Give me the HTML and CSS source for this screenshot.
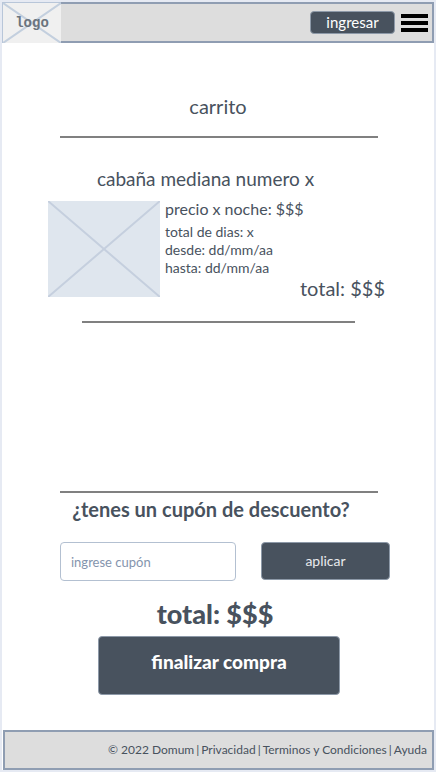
FILE: index.html
```html
<!DOCTYPE html>
<html lang="es">
<head>
<meta charset="utf-8">
<meta name="viewport" content="width=device-width, initial-scale=1">
<title>Carrito</title>
<link rel="stylesheet" href="styles.css">
</head>
<body>
<header class="topbar">
  <a class="logo" href="#" aria-label="logo">
    <svg class="cross" viewBox="0 0 58 40" preserveAspectRatio="none" aria-hidden="true"><path d="M0 0L58 40M58 0L0 40"/></svg>
    <span class="logo-text">logo</span>
  </a>
  <button class="login" type="button">ingresar</button>
  <button class="menu" type="button" aria-label="menú">
    <svg viewBox="0 0 27 18" aria-hidden="true"><path d="M0 2H27M0 9H27M0 16H27"/></svg>
  </button>
</header>
<main class="cart">
  <h1 class="title">carrito</h1>
  <hr class="rule">
  <section class="item">
    <h2 class="item-name">cabaña mediana numero x</h2>
    <div class="item-row">
      <svg class="photo" viewBox="0 0 112 96" preserveAspectRatio="none" aria-hidden="true"><path d="M0 0L112 96M112 0L0 96"/></svg>
      <div class="details">
        <p class="price">precio x noche: $$$</p>
        <p class="line">total de dias: x</p>
        <p class="line">desde: dd/mm/aa</p>
        <p class="line">hasta: dd/mm/aa</p>
        <p class="item-total">total: $$$</p>
      </div>
    </div>
    <hr class="rule item-rule">
  </section>
  <section class="checkout">
    <hr class="rule">
    <h2 class="question"><label for="coupon">¿tenes un cupón de descuento?</label></h2>
    <form class="coupon">
      <input class="coupon-input" id="coupon" type="text" placeholder="ingrese cupón">
      <button class="apply" type="button">aplicar</button>
    </form>
    <p class="total">total: $$$</p>
    <button class="finish" type="button">finalizar compra</button>
  </section>
</main>
<footer class="footer">
  <span>© 2022 Domum</span> | <a href="#">Privacidad</a> | <a href="#">Terminos y Condiciones</a> | <a href="#">Ayuda</a>
</footer>
</body>
</html>
```
FILE: styles.css
```css
* {
  box-sizing: border-box;
  margin: 0;
}

body {
  display: flex;
  flex-direction: column;
  min-height: 100vh;
  border: 2px solid #e6eaf3;
  background: #fff;
  color: #48525e;
  font-family: Lato, sans-serif;
  font-size: 16px;
}

button,
input {
  font-family: inherit;
}

button {
  padding: 0;
  border: 1px solid #8d99a8;
  border-radius: 4px;
  background: #48525e;
  color: #fff;
}

.topbar,
.footer {
  display: flex;
  align-items: center;
  border: 2px solid #8f9db2;
  background: #ddd;
}

.topbar {
  height: 41px;
  padding-right: 4px;
}

.logo {
  display: grid;
  place-items: center;
  width: 59px;
  height: 41px;
  margin-left: -2px;
  border: 1px solid #b8c6d9;
  border-width: 1px 0 0 1px;
  background: #f0f0f0;
  color: #6b747e;
  text-decoration: none;
}

.logo > * {
  grid-area: 1 / 1;
}

.cross {
  width: 100%;
  height: 40px;
  fill: none;
  stroke: #c3cfde;
  stroke-width: 2;
}

.logo-text {
  font: bold 14px "Liberation Mono", monospace;
}

.login {
  width: 85px;
  height: 23px;
  margin-left: auto;
  padding-bottom: 2px;
  font-size: 15px;
  line-height: 18px;
}

.menu {
  width: 27px;
  height: 18px;
  margin-left: 6px;
  border: 0;
  border-radius: 0;
  background: none;
}

.menu svg {
  display: block;
  stroke: #000;
  stroke-width: 4;
}

.cart {
  display: flex;
  flex: 1;
  flex-direction: column;
  padding: 51px 56px 35px 58px;
}

.title,
.item-name {
  font-size: 20px;
  font-weight: 400;
  line-height: 24px;
  text-align: center;
}

.title {
  padding-right: 2px;
}

.rule {
  height: 2px;
  border: 0;
  background: #808080;
}

.title + .rule {
  margin-top: 18px;
}

.item {
  margin: 29px -7px 0 -12px;
}

.item-name {
  padding-right: 22px;
  font-size: 19px;
}

.item-row {
  display: flex;
  gap: 5px;
  margin: 6px 0 20px;
}

.photo {
  flex: none;
  width: 112px;
  height: 96px;
  margin-top: 4px;
  background: #dfe6ee;
  fill: none;
  stroke: #c5cfde;
  stroke-width: 2;
}

.details {
  flex: 1;
}

.price {
  margin-bottom: 2px;
  font-size: 16px;
  line-height: 24px;
}

.line {
  font-size: 14px;
  line-height: 18px;
}

.item-total {
  font-size: 20px;
  line-height: 22px;
  margin-bottom: 2px;
  text-align: right;
}

.item-rule {
  margin: 0 30px 0 34px;
}

.checkout {
  display: flex;
  flex-direction: column;
  margin-top: auto;
}

.question {
  padding-right: 16px;
  margin-top: 4px;
  font-size: 20px;
  font-weight: 700;
  line-height: 24px;
  text-align: center;
}

.coupon {
  display: grid;
  grid-template-columns: 176fr 129fr;
  gap: 25px;
  margin: 21px -12px 17px 0;
}

.coupon-input {
  width: 100%;
  height: 39px;
  padding: 0 10px;
  border: 1px solid #b3c0d1;
  border-radius: 4px;
  background: #fff;
  color: #48525e;
  font-size: 13px;
}

.coupon-input::placeholder {
  color: #8494ad;
}

.apply {
  height: 38px;
  padding-bottom: 2px;
  color: #e8eaed;
  font-size: 14px;
}

.total {
  padding-right: 8px;
  font-size: 27px;
  font-weight: 900;
  line-height: 32px;
  text-align: center;
}

.finish {
  width: 76%;
  height: 59px;
  margin-top: 6px;
  padding-bottom: 8px;
  align-self: center;
  font-size: 19px;
  font-weight: 900;
}

.footer {
  justify-content: flex-end;
  gap: 2px;
  min-height: 40px;
  margin-left: 1px;
  padding: 0 5px;
  font-size: 12px;
  line-height: 16px;
}

.footer a {
  color: inherit;
  text-decoration: none;
}
```
